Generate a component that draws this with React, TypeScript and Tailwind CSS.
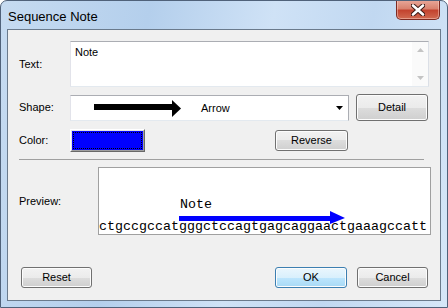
import React from 'react';

const FONT = { fontFamily: '"Liberation Sans", Arial, sans-serif' };
const MONO = { fontFamily: '"Liberation Mono", "Courier New", monospace' };

const SEQUENCE = 'ctgccgccatgggctccagtgagcaggaactgaaagccatt';

// Win7-style push button
function Button({
  label,
  width,
  height = 21,
  primary = false,
  className = ''
}: {
  label: string;
  width: number;
  height?: number;
  primary?: boolean;
  className?: string;
}) {
  const skin = primary
    ? 'border-[#3c7fb1] bg-[linear-gradient(#eaf6fd,#d9f0fc_50%,#bee6fd_50%,#a7d9f5)]'
    : 'border-[#707070] bg-[linear-gradient(#f2f2f2,#ebebeb_50%,#dddddd_50%,#cfcfcf)]';
  return (
    <div
      className={`flex shrink-0 items-center justify-center rounded-[3px] border text-[11px] text-black shadow-[inset_0_0_0_1px_#fcfcfc] ${skin} ${className}`}
      style={{ width, height }}
    >
      {label}
    </div>
  );
}

function CloseButton() {
  return (
    <div className="mt-[-1px] mr-[7px] flex h-[20px] w-[44px] items-center justify-center rounded-b-[5px] border border-t-0 border-[#7d2a22] bg-[linear-gradient(#e9a99b,#d9826f_45%,#c3432f_55%,#d16a51)] shadow-[inset_0_0_0_1px_rgba(255,220,210,0.45)]">
      <svg width="14" height="12" viewBox="0 0 14 12">
        <path d="M2 1.5 L12 10.5 M12 1.5 L2 10.5" stroke="#3d1a16" strokeWidth="4.6" strokeLinecap="round" />
        <path d="M2 1.5 L12 10.5 M12 1.5 L2 10.5" stroke="#ffffff" strokeWidth="2.6" strokeLinecap="round" />
      </svg>
    </div>
  );
}

function Label({ text, width }: { text: string; width: number }) {
  return (
    <span className="shrink-0 text-[11px] text-black" style={{ width }}>
      {text}
    </span>
  );
}

export default function App() {
  return (
    <div
      className="flex h-[308px] w-[448px] flex-col overflow-hidden rounded-t-[7px] border border-[#50627a] bg-[linear-gradient(100deg,#c6dbf1_0%,#b4cfec_30%,#cfe2f6_55%,#c1d8f1_75%,#d6e7f8_100%)]"
      style={FONT}
    >
      {/* title bar */}
      <div className="flex h-[28px] shrink-0 items-start justify-between">
        <span className="pt-[6px] pl-[7px] text-[13px] text-black">Sequence Note</span>
        <CloseButton />
      </div>

      {/* client area */}
      <div className="mx-[6px] mb-[6px] flex flex-1 flex-col border border-[#6a7a8c] bg-[#f0f0f0] px-[11px] pb-[12px]">
        {/* Text */}
        <div className="mt-[11px] flex items-center">
          <Label text="Text:" width={51} />
          <div className="flex h-[46px] w-[359px] shrink-0 border border-[#abadb3] border-l-[#e2e3ea] border-b-[#e3e9ef] border-r-[#dbdfe6] bg-white">
            <span className="flex-1 pt-[3px] pl-[4px] text-[11px] leading-[14px] text-black">Note</span>
            <div className="flex w-[16px] flex-col items-center justify-between bg-[#fafafa] py-[6px]">
              <svg width="7" height="4" viewBox="0 0 7 4">
                <path d="M0 4 L3.5 0 L7 4 Z" fill="#c4c4c4" />
              </svg>
              <svg width="7" height="4" viewBox="0 0 7 4">
                <path d="M0 0 L3.5 4 L7 0 Z" fill="#c4c4c4" />
              </svg>
            </div>
          </div>
        </div>

        {/* Shape */}
        <div className="mt-[7px] flex items-center">
          <Label text="Shape:" width={51} />
          <div className="mt-px flex h-[26px] w-[279px] shrink-0 items-center border border-[#abadb3] border-l-[#e2e3ea] border-b-[#e3e9ef] bg-white pl-[23px]">
            <svg width="87" height="17" viewBox="0 0 87 17">
              <rect x="0" y="4" width="79" height="6" fill="#000" />
              <path d="M78 0 L87 8.5 L78 17 Z" fill="#000" />
            </svg>
            <span className="ml-[20px] text-[11px] text-black">Arrow</span>
            <svg className="mr-[5px] ml-auto" width="7" height="4" viewBox="0 0 7 4">
              <path d="M0 0 L3.5 4 L7 0 Z" fill="#000" />
            </svg>
          </div>
          <Button label="Detail" width={72} height={27} className="ml-[7px]" />
        </div>

        {/* Color */}
        <div className="mt-[8px] flex items-center">
          <Label text="Color:" width={51} />
          <div className="h-[23px] w-[75px] shrink-0 border border-t-white border-l-white border-r-[#696969] border-b-[#696969]">
            <div className="h-full w-full border border-t-[#e3e3e3] border-l-[#e3e3e3] border-r-[#a0a0a0] border-b-[#a0a0a0] bg-[#0000ff] p-[1px]">
              <div className="h-full w-full border border-dotted border-black" />
            </div>
          </div>
          <Button label="Reverse" width={73} className="ml-[130px]" />
        </div>

        {/* separator */}
        <div className="mt-[7px] mr-[5px] h-px bg-[#a0a0a0]" />

        {/* Preview */}
        <div className="mt-[7px] flex items-center">
          <Label text="Preview:" width={79} />
          <div className="flex h-[68px] w-[333px] shrink-0 flex-col justify-end border border-[#a0a0a0] bg-white">
            <span className="pl-[81px] text-[13.33px] leading-[14px] text-black" style={MONO}>
              Note
            </span>
            <svg className="-mt-[2px] -mb-[4px] ml-[80px]" width="167" height="14" viewBox="0 0 167 14">
              <rect x="0" y="6" width="153" height="5" fill="#0000ff" />
              <path d="M151 1 L166 8 L151 14 Z" fill="#0000ff" />
            </svg>
            <span className="relative text-[13.33px] leading-[14px] text-black" style={MONO}>
              {SEQUENCE}
            </span>
          </div>
        </div>

        {/* footer buttons */}
        <div className="mt-auto flex items-center">
          <Button label="Reset" width={71} className="ml-[2px]" />
          <Button label="OK" width={72} primary className="ml-auto" />
          <Button label="Cancel" width={71} className="mr-px ml-[10px]" />
        </div>
      </div>
    </div>
  );
}
